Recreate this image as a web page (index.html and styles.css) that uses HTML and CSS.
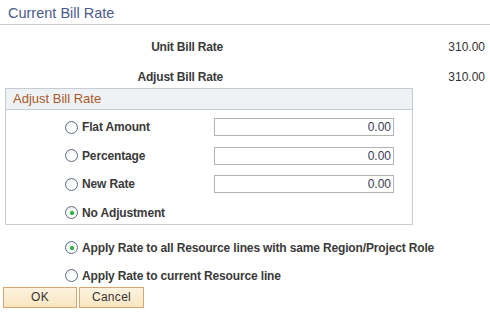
FILE: index.html
```html
<!DOCTYPE html>
<html>
<head>
<meta charset="utf-8">
<link rel="stylesheet" href="styles.css">
</head>
<body>
<div class="title">Current Bill Rate</div>
<div class="rates">
  <div class="rate-row"><span class="rate-label">Unit Bill Rate</span><span class="rate-value">310.00</span></div>
  <div class="rate-row"><span class="rate-label">Adjust Bill Rate</span><span class="rate-value">310.00</span></div>
</div>
<div class="group">
  <div class="group-head">Adjust Bill Rate</div>
  <div class="group-body">
    <div class="opt"><span class="radio"></span><span class="opt-label">Flat Amount</span><span class="field">0.00</span></div>
    <div class="opt"><span class="radio"></span><span class="opt-label">Percentage</span><span class="field">0.00</span></div>
    <div class="opt"><span class="radio"></span><span class="opt-label">New Rate</span><span class="field">0.00</span></div>
    <div class="opt"><span class="radio checked"></span><span class="opt-label">No Adjustment</span></div>
  </div>
</div>
<div class="apply">
  <div class="opt"><span class="radio checked"></span><span class="opt-label">Apply Rate to all Resource lines with same Region/Project Role</span></div>
  <div class="opt"><span class="radio"></span><span class="opt-label">Apply Rate to current Resource line</span></div>
</div>
<div class="buttons">
  <button class="btn btn-ok">OK</button>
  <button class="btn btn-cancel">Cancel</button>
</div>
</body>
</html>
```
FILE: styles.css
```css
* { box-sizing: border-box; }
html, body { margin: 0; padding: 0; background: #fff; }
body {
  width: 490px;
  height: 312px;
  overflow: hidden;
  font-family: "Liberation Sans", Arial, sans-serif;
  font-size: 12px;
  color: #333;
}
.title {
  height: 25px;
  padding: 3px 0 0 8px;
  line-height: 21px;
  font-size: 14.5px;
  color: #4b5b8c;
  border-bottom: 1px solid #c9ced3;
}
.rates {
  margin-top: 12px;
  display: flex;
  flex-direction: column;
  gap: 10px;
}
.rate-row {
  height: 20px;
  display: grid;
  grid-template-columns: 223px 1fr;
  align-items: center;
}
.rate-label {
  text-align: right;
  font-weight: bold;
  letter-spacing: -0.2px;
  color: #3a3a3a;
}
.rate-value {
  text-align: right;
  padding-right: 5px;
}
.group {
  margin: 1px 0 0 5px;
  width: 408px;
  border: 1px solid #c6ccd1;
}
.group-head {
  height: 21px;
  line-height: 20px;
  padding-left: 7px;
  font-size: 13px;
  color: #a8592b;
  background: #eff2f4;
  border-bottom: 1px solid #c6ccd1;
}
.group-body {
  padding: 7px 0 1px 59px;
  display: flex;
  flex-direction: column;
  gap: 8.5px;
}
.opt {
  height: 20px;
  display: flex;
  align-items: center;
}
.radio {
  width: 13px;
  height: 13px;
  margin-right: 4px;
  border-radius: 50%;
  border: 1px solid #5f6d80;
  background: radial-gradient(circle at 60% 65%, #ffffff 40%, #dfe2e6 100%);
  position: relative;
  flex: none;
}
.radio.checked::after {
  content: "";
  position: absolute;
  left: 3.5px;
  top: 3.5px;
  width: 4px;
  height: 4px;
  border-radius: 50%;
  background: #29b33a;
  box-shadow: 0 0 1px #5fd36b;
}
.opt-label {
  font-weight: bold;
  letter-spacing: -0.15px;
  white-space: nowrap;
  color: #3a3a3a;
}
.group .opt-label {
  width: 132px;
}
.field {
  width: 180px;
  height: 18px;
  border: 1px solid #b3b3b3;
  text-align: right;
  padding-right: 2px;
  line-height: 16px;
  color: #3a3a55;
}
.apply {
  margin-top: 13px;
  padding-left: 65px;
  display: flex;
  flex-direction: column;
  gap: 8px;
}
.buttons {
  margin: 1px 0 0 3px;
  display: flex;
  gap: 2px;
}
.btn {
  height: 21px;
  padding: 0;
  font-family: "Liberation Sans", Arial, sans-serif;
  font-size: 12px;
  letter-spacing: 0.3px;
  color: #333;
  border: 1px solid #d9a66f;
  background: linear-gradient(#fdf3df, #fae6c0);
  border-radius: 0;
}
.btn-ok { width: 74px; }
.btn-cancel { width: 65px; }
```
